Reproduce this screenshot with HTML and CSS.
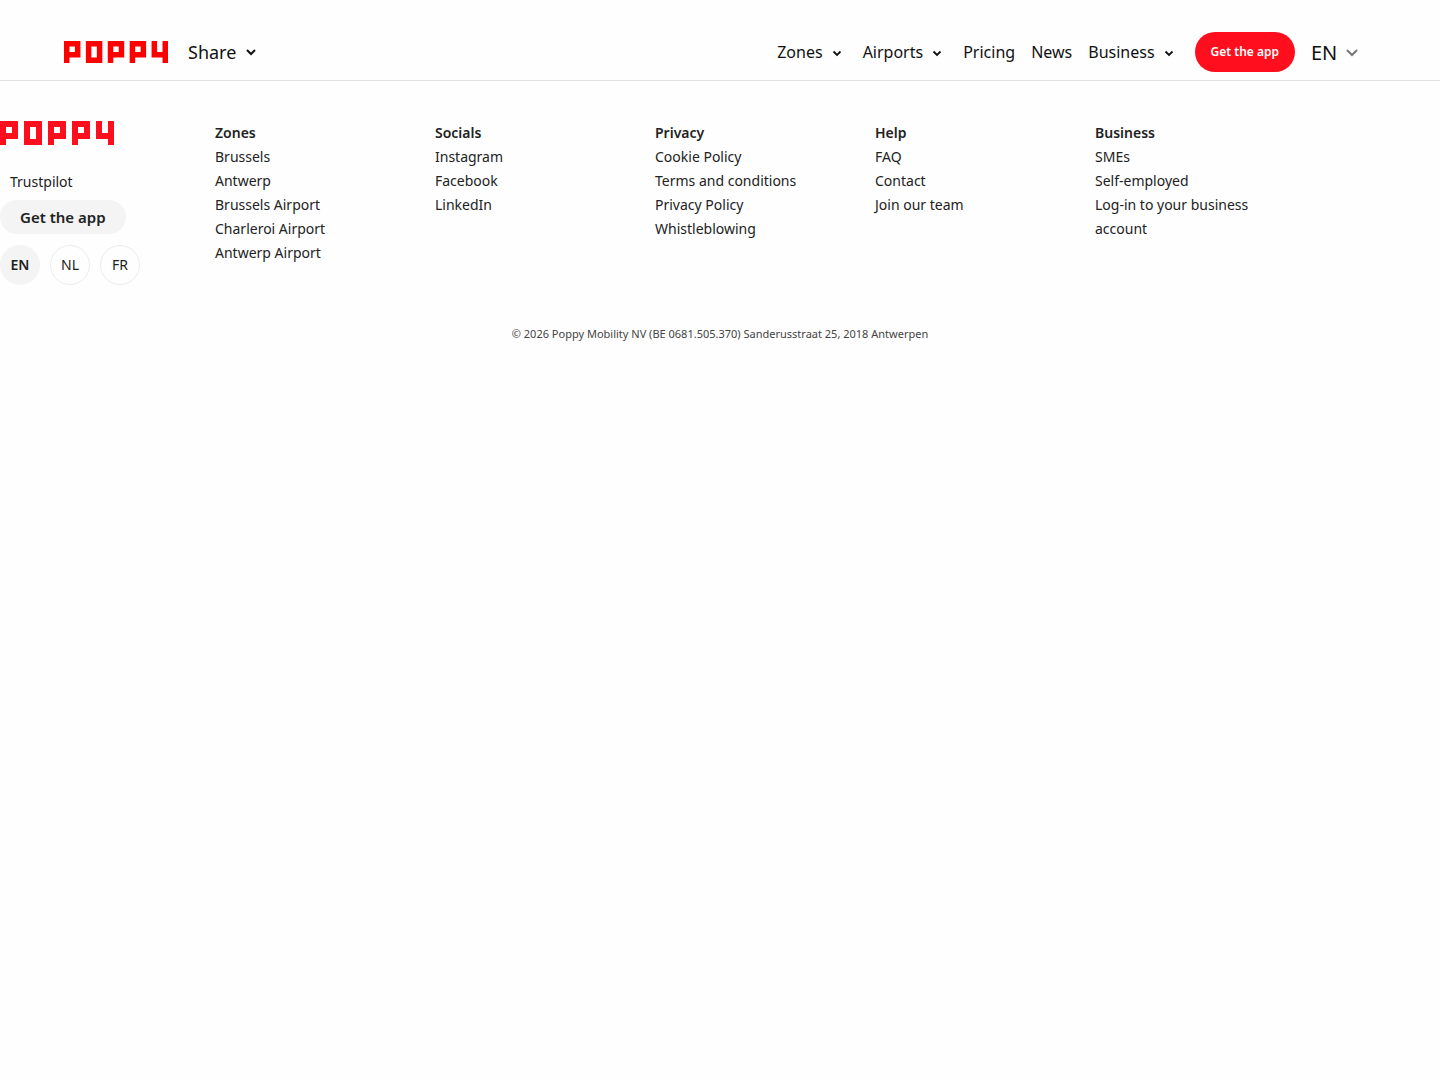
FILE: index.html
```
<!DOCTYPE html>
<html lang="en">
<head>
    <meta charset="UTF-8">
    <meta name="viewport" content="width=device-width, initial-scale=1.0">
    <title>Poppy</title>
    <link rel="stylesheet" href="styles.css">
</head>
<body>

<svg class="symbols" aria-hidden="true">
    <symbol id="logo" viewBox="0 0 114 24">
        <path fill-rule="evenodd" d="M0 0h18v18H6v6H0zM6 6v6h6V6zM24 0h18v24H24zM30 6v12h6V6zM48 0h18v18H54v6h-6zM54 6v6h6V6zM72 0h18v18H78v6h-6zM78 6v6h6V6zM96 0h6v12h6V0h6v24h-6v-6H96z"/>
    </symbol>
    <symbol id="chevron" viewBox="0 0 12 12">
        <path d="M2 4l4 4 4-4" fill="none" stroke="currentColor" stroke-width="2"/>
    </symbol>
    <symbol id="chevron-small" viewBox="0 0 12 12">
        <path d="M2.500 5.500l3.500 3.500 3.500-3.500" fill="none" stroke="currentColor" stroke-width="1.800"/>
    </symbol>
</svg>

<header class="header">
    <a href="#" class="header-logo" aria-label="Poppy"><svg class="logo"><use href="#logo"/></svg></a>
    <button type="button" class="share">Share <svg class="chevron"><use href="#chevron"/></svg></button>

    <nav class="nav">
        <button type="button" class="nav-link">Zones <svg class="chevron"><use href="#chevron-small"/></svg></button>
        <button type="button" class="nav-link">Airports <svg class="chevron"><use href="#chevron-small"/></svg></button>
        <a href="#" class="nav-link">Pricing</a>
        <a href="#" class="nav-link">News</a>
        <button type="button" class="nav-link">Business <svg class="chevron"><use href="#chevron-small"/></svg></button>
    </nav>

    <a href="#" class="btn-red">Get the app</a>
    <select class="lang-select" aria-label="Language">
        <option>EN</option>
        <option>NL</option>
        <option>FR</option>
    </select>
</header>

<footer class="footer">
    <div class="footer-grid">
        <div class="footer-brand">
            <a href="#" class="footer-logo" aria-label="Poppy"><svg class="logo"><use href="#logo"/></svg></a>
            <a href="#" class="trustpilot">Trustpilot</a>
            <a href="#" class="btn-grey">Get the app</a>
            <div class="langs">
                <a href="#" class="lang active">EN</a>
                <a href="#" class="lang">NL</a>
                <a href="#" class="lang">FR</a>
            </div>
        </div>
        <div class="footer-col">
            <h2>Zones</h2>
            <a href="#">Brussels</a>
            <a href="#">Antwerp</a>
            <a href="#">Brussels Airport</a>
            <a href="#">Charleroi Airport</a>
            <a href="#">Antwerp Airport</a>
        </div>
        <div class="footer-col">
            <h2>Socials</h2>
            <a href="#">Instagram</a>
            <a href="#">Facebook</a>
            <a href="#">LinkedIn</a>
        </div>
        <div class="footer-col">
            <h2>Privacy</h2>
            <a href="#">Cookie Policy</a>
            <a href="#">Terms and conditions</a>
            <a href="#">Privacy Policy</a>
            <a href="#">Whistleblowing</a>
        </div>
        <div class="footer-col">
            <h2>Help</h2>
            <a href="#">FAQ</a>
            <a href="#">Contact</a>
            <a href="#">Join our team</a>
        </div>
        <div class="footer-col">
            <h2>Business</h2>
            <a href="#">SMEs</a>
            <a href="#">Self-employed</a>
            <a href="#">Log-in to your business account</a>
        </div>
    </div>
    <p class="copyright">© 2026 Poppy Mobility NV (BE 0681.505.370) Sanderusstraat 25, 2018 Antwerpen</p>
</footer>

</body>
</html>
```
FILE: styles.css
```
* {
    box-sizing: border-box;
}

body {
    margin: 0;
    font-family: "Noto Sans", "Open Sans", sans-serif;
    background: #fefefe;
    color: #222;
}

a {
    color: inherit;
    text-decoration: none;
}

button, select {
    font-family: inherit;
    color: inherit;
    background: none;
    border: none;
    padding: 0;
    cursor: pointer;
}

.symbols {
    display: none;
}

.logo {
    display: block;
    width: 100%;
    height: 100%;
    fill: #ff0f1e;
}

.header .logo {
    fill: #ff0000;
}

.chevron {
    width: 12px;
    height: 12px;
}

/* Header */
.header {
    display: flex;
    align-items: center;
    padding: 32px 82px 8px 64px;
    border-bottom: 1px solid #e2e2e2;
    color: #111;
}

.header-logo {
    width: 104px;
    height: 22px;
}

.share {
    display: flex;
    align-items: center;
    gap: 9px;
    margin-left: 20px;
    font-size: 18px;
}

.nav {
    display: flex;
    gap: 16px;
    margin-left: auto;
}

.nav-link {
    display: flex;
    align-items: center;
    gap: 8px;
    font-size: 16px;
    line-height: 24px;
}

button.nav-link {
    padding-right: 4px;
}

.btn-red {
    margin: 0 16px;
    padding: 0 16px;
    border-radius: 20px;
    background: #ff0f1e;
    color: #fff;
    font-size: 12px;
    font-weight: 600;
    line-height: 40px;
}

.lang-select {
    width: 47px;
    appearance: none;
    font-size: 20px;
    background: url("data:image/svg+xml,%3Csvg xmlns='http://www.w3.org/2000/svg' viewBox='0 0 12 12'%3E%3Cpath d='M1 4l5 5 5-5' fill='none' stroke='%23777' stroke-width='2'/%3E%3C/svg%3E") no-repeat right center / 12px 12px;
}

/* Footer */
.footer {
    padding: 40px 0;
    font-size: 14px;
    line-height: 24px;
}

.footer-grid {
    display: grid;
    grid-template-columns: 195px repeat(5, minmax(0, 200px));
    column-gap: 20px;
}

.footer-brand {
    display: flex;
    flex-direction: column;
    align-items: flex-start;
}

.footer-logo {
    width: 114px;
    height: 24px;
}

.trustpilot {
    margin: 25px 10px 6px;
}

.btn-grey {
    padding: 0 20px;
    border-radius: 17px;
    background: #f4f4f4;
    font-size: 15px;
    font-weight: 600;
    line-height: 34px;
}

.langs {
    display: flex;
    gap: 10px;
    margin-top: 11px;
}

.lang {
    width: 40px;
    border: 1px solid #ececec;
    border-radius: 50%;
    text-align: center;
    line-height: 38px;
}

.lang.active {
    border-color: #f4f4f4;
    background: #f4f4f4;
    font-weight: 600;
}

.footer-col h2 {
    margin: 0;
    font-size: 14px;
    font-weight: 600;
}

.footer-col a {
    display: block;
}

.copyright {
    margin: 37px 0 0;
    font-size: 11px;
    text-align: center;
    color: #444;
}
```
